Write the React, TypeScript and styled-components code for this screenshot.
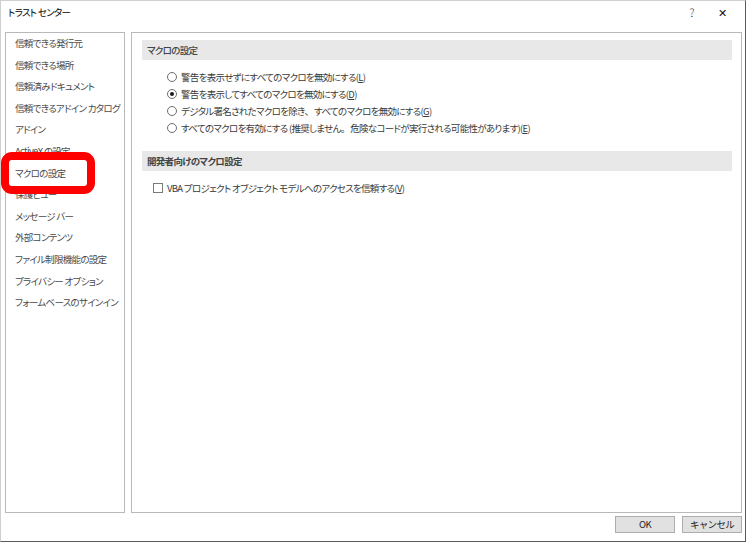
import React from "react";
import styled, { createGlobalStyle } from "styled-components";

const Global = createGlobalStyle`
  html, body { margin: 0; padding: 0; background: #ffffff; }
  body {
    font-family: "Noto Sans CJK JP", "Noto Sans", sans-serif;
    font-feature-settings: "palt";
    letter-spacing: -0.7px;
    color: #333;
  }
`;

const Window = styled.div`
  position: relative;
  box-sizing: border-box;
  width: 746px;
  height: 542px;
  background: #fff;
  border-top: 1px solid #cfcfcf;
  border-left: 1px solid #cfcfcf;
  border-right: 1px solid #5a5a5a;
  border-bottom: 1px solid #5a5a5a;
  display: flex;
  flex-direction: column;
`;

const TitleBar = styled.div`
  height: 31px;
  display: flex;
  align-items: flex-start;
  padding: 4px 0 0 7px;
  box-sizing: border-box;
`;

const Title = styled.div`
  flex: 1;
  font-size: 9.5px;
  line-height: 15px;
  color: #000;
`;

const TitleButton = styled.div<{ $w: number }>`
  width: ${(p) => p.$w}px;
  text-align: center;
  font-size: 11px;
  font-weight: 300;
  line-height: 15px;
  letter-spacing: 0;
  color: #111;
`;

const Body = styled.div`
  flex: 1;
  min-height: 0;
  display: flex;
  gap: 6px;
  padding: 0 3px 0 4px;
`;

const Nav = styled.div`
  width: 120px;
  box-sizing: border-box;
  border: 1px solid #b9b9b9;
  padding: 0;
  display: flex;
  flex-direction: column;
`;

const NavItem = styled.div`
  height: 21.6px;
  line-height: 21.6px;
  padding-left: 9px;
  font-size: 9.5px;
  color: #4a4a4a;
  white-space: nowrap;
`;

const Content = styled.div`
  flex: 1;
  box-sizing: border-box;
  border: 1px solid #b9b9b9;
  padding: 7px 9px 0 10px;
  display: flex;
  flex-direction: column;
`;

const SectionHeader = styled.div<{ $bold?: boolean }>`
  height: 20px;
  line-height: 20px;
  background: #e8e8e8;
  padding-left: 5px;
  font-size: 9.5px;
  font-weight: ${(p) => (p.$bold ? 700 : 500)};
  color: #444;
`;

const OptionList = styled.div<{ $top: number; $bottom: number; $indent: number }>`
  display: flex;
  flex-direction: column;
  padding: ${(p) => p.$top}px 0 ${(p) => p.$bottom}px ${(p) => p.$indent}px;
`;

const OptionRow = styled.label`
  display: flex;
  align-items: center;
  gap: 4px;
  height: 16.8px;
  font-size: 9.5px;
  color: #3a3a3a;
  white-space: nowrap;
`;

const Radio = styled.span<{ $checked?: boolean }>`
  box-sizing: border-box;
  width: 10px;
  height: 10px;
  border-radius: 50%;
  border: 1px solid #6d6d6d;
  background: #fff;
  display: flex;
  align-items: center;
  justify-content: center;
  &::after {
    content: "";
    width: 4px;
    height: 4px;
    border-radius: 50%;
    background: ${(p) => (p.$checked ? "#1a1a1a" : "transparent")};
  }
`;

const Check = styled.span`
  box-sizing: border-box;
  width: 10px;
  height: 10px;
  border: 1px solid #7a7a7a;
  background: #fff;
`;

const Key = styled.span`
  text-decoration: underline;
`;

const Punct = styled.span`
  font-feature-settings: normal;
  letter-spacing: 0;
`;

const Footer = styled.div`
  height: 28px;
  display: flex;
  justify-content: flex-end;
  align-items: flex-start;
  gap: 7px;
  padding: 3px 3px 0 0;
  box-sizing: border-box;
`;

const Button = styled.button`
  width: 60px;
  height: 17px;
  box-sizing: border-box;
  border: 1px solid #adadad;
  background: #e1e1e1;
  font-family: inherit;
  letter-spacing: inherit;
  font-size: 9.5px;
  color: #222;
  padding: 0;
  line-height: 15px;
`;

const Annotation = styled.div`
  position: absolute;
  left: 0px;
  top: 151px;
  width: 94px;
  height: 42px;
  box-sizing: border-box;
  border: 8px solid #ff0000;
  border-radius: 11px;
  background: transparent;
  pointer-events: none;
`;

const Grip = styled.div`
  position: absolute;
  right: 0;
  bottom: 0;
  width: 6px;
  height: 6px;
  background-image: radial-gradient(#9a9a9a 0.6px, transparent 0.7px);
  background-size: 2px 2px;
`;

const navItems = [
  "信頼できる発行元",
  "信頼できる場所",
  "信頼済みドキュメント",
  "信頼できるアドイン カタログ",
  "アドイン",
  "ActiveX の設定",
  "マクロの設定",
  "保護ビュー",
  "メッセージ バー",
  "外部コンテンツ",
  "ファイル制限機能の設定",
  "プライバシー オプション",
  "フォームベースのサインイン",
];

const radios: { text: React.ReactNode; key: string; checked?: boolean }[] = [
  { text: "警告を表示せずにすべてのマクロを無効にする", key: "L" },
  { text: "警告を表示してすべてのマクロを無効にする", key: "D", checked: true },
  {
    text: (
      <>
        デジタル署名されたマクロを除き<Punct>、</Punct>すべてのマクロを無効にする
      </>
    ),
    key: "G",
  },
  {
    text: (
      <>
        すべてのマクロを有効にする (推奨しません<Punct>。</Punct>危険なコードが実行される可能性があります)
      </>
    ),
    key: "E",
  },
];

export default function App() {
  return (
    <>
      <Global />
      <Window>
        <TitleBar>
          <Title>トラスト センター</Title>
          <TitleButton $w={14}>?</TitleButton>
          <TitleButton $w={46}>✕</TitleButton>
        </TitleBar>
        <Body>
          <Nav>
            {navItems.map((n) => (
              <NavItem key={n}>{n}</NavItem>
            ))}
          </Nav>
          <Content>
            <SectionHeader>マクロの設定</SectionHeader>
            <OptionList $top={9} $bottom={15} $indent={25}>
              {radios.map((r) => (
                <OptionRow key={r.key}>
                  <Radio $checked={r.checked} />
                  <span>
                    {r.text}(<Key>{r.key}</Key>)
                  </span>
                </OptionRow>
              ))}
            </OptionList>
            <SectionHeader $bold>開発者向けのマクロ設定</SectionHeader>
            <OptionList $top={8} $bottom={0} $indent={11}>
              <OptionRow>
                <Check />
                <span>
                  VBA プロジェクト オブジェクト モデルへのアクセスを信頼する(<Key>V</Key>)
                </span>
              </OptionRow>
            </OptionList>
          </Content>
        </Body>
        <Footer>
          <Button>OK</Button>
          <Button>キャンセル</Button>
        </Footer>
        <Annotation />
        <Grip />
      </Window>
    </>
  );
}
